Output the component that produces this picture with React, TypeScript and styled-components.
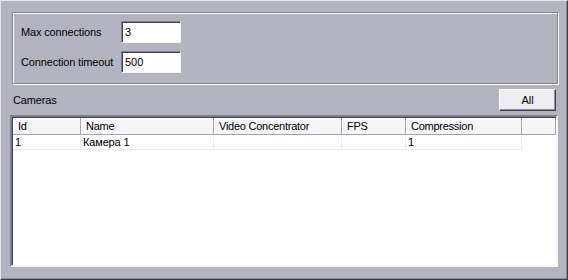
import React from "react";
import styled, { createGlobalStyle } from "styled-components";

const Global = createGlobalStyle`
  html, body { margin: 0; padding: 0; background: #b4b4c0; }
  * { box-sizing: border-box; }
`;

const Window = styled.div`
  width: 568px;
  height: 280px;
  background: #b4b4c0;
  border: 1px solid;
  border-color: #e6e6ec #3c3c44 #3c3c44 #e6e6ec;
  box-shadow: inset -1px -1px 0 #8c8c96;
  padding: 11px 9px 0 9px;
  display: flex;
  flex-direction: column;
  font-family: "Liberation Sans", Arial, sans-serif;
  font-size: 11px;
  color: #000;
`;

const GroupBox = styled.div`
  margin-left: 2px;
  height: 72px;
  border: 1px solid #868690;
  box-shadow: inset 1px 1px 0 #fff, 1px 1px 0 #fff;
  padding: 8px 0 0 8px;
  display: grid;
  grid-template-columns: 100px 60px;
  grid-auto-rows: 22px;
  row-gap: 8px;
  align-items: center;
`;

const Label = styled.span`
  white-space: nowrap;
  letter-spacing: -0.15px;
`;

const TextBox = styled.div`
  height: 22px;
  width: 60px;
  background: #fff;
  border: 1px solid;
  border-color: #80808a #f4f4f4 #f4f4f4 #80808a;
  box-shadow: inset 1px 1px 0 #404048;
  padding: 3px 0 0 3px;
  line-height: 14px;
`;

const CamerasRow = styled.div`
  margin-top: 5px;
  height: 22px;
  display: flex;
  align-items: center;
  justify-content: space-between;
  padding-left: 3px;
  padding-right: 2px;
`;

const Button = styled.button`
  width: 57px;
  height: 22px;
  font: inherit;
  color: #000;
  background: #eeeef2;
  border: 1px solid;
  border-color: #fff #404048 #404048 #fff;
  box-shadow: inset -1px -1px 0 #9090a0;
  padding: 0;
`;

const ListView = styled.div`
  margin-top: 4px;
  height: 152px;
  background: #fff;
  border: 2px solid;
  border-color: #80808a #f8f8f8 #f8f8f8 #80808a;
  box-shadow: inset 1px 1px 0 #404048;
  padding: 1px 0 0 1px;
  display: flex;
  flex-direction: column;
`;

const HeaderRow = styled.div`
  display: flex;
  height: 17px;
`;

const HeaderCell = styled.div<{ $w?: number }>`
  ${(p) => (p.$w ? `width: ${p.$w}px; flex: none;` : "flex: 1;")}
  background: #f6f6f8;
  border-right: 1px solid #a4a4ae;
  border-bottom: 1px solid #a4a4ae;
  box-shadow: inset 1px 1px 0 #fff;
  padding-left: 5px;
  line-height: 16px;
  white-space: nowrap;
  letter-spacing: -0.25px;
`;

const DataRow = styled.div`
  display: flex;
  height: 15px;
`;

const DataCell = styled.div<{ $w: number }>`
  width: ${(p) => p.$w}px;
  flex: none;
  border-right: 1px solid #ececee;
  border-bottom: 1px solid #ececee;
  padding-left: 2px;
  line-height: 14px;
  white-space: nowrap;
  letter-spacing: -0.15px;
`;

const columns = [
  { title: "Id", w: 68 },
  { title: "Name", w: 133 },
  { title: "Video Concentrator", w: 128 },
  { title: "FPS", w: 64 },
  { title: "Compression", w: 116 },
];

const rows = [["1", "Камера 1", "", "", "1"]];

export default function App() {
  return (
    <>
      <Global />
      <Window>
        <GroupBox>
          <Label>Max connections</Label>
          <TextBox>3</TextBox>
          <Label>Connection timeout</Label>
          <TextBox>500</TextBox>
        </GroupBox>
        <CamerasRow>
          <Label>Cameras</Label>
          <Button>All</Button>
        </CamerasRow>
        <ListView>
          <HeaderRow>
            {columns.map((c) => (
              <HeaderCell key={c.title} $w={c.w}>
                {c.title}
              </HeaderCell>
            ))}
            <HeaderCell />
          </HeaderRow>
          {rows.map((r, i) => (
            <DataRow key={i}>
              {r.map((v, j) => (
                <DataCell key={j} $w={columns[j].w}>
                  {v}
                </DataCell>
              ))}
            </DataRow>
          ))}
        </ListView>
      </Window>
    </>
  );
}
